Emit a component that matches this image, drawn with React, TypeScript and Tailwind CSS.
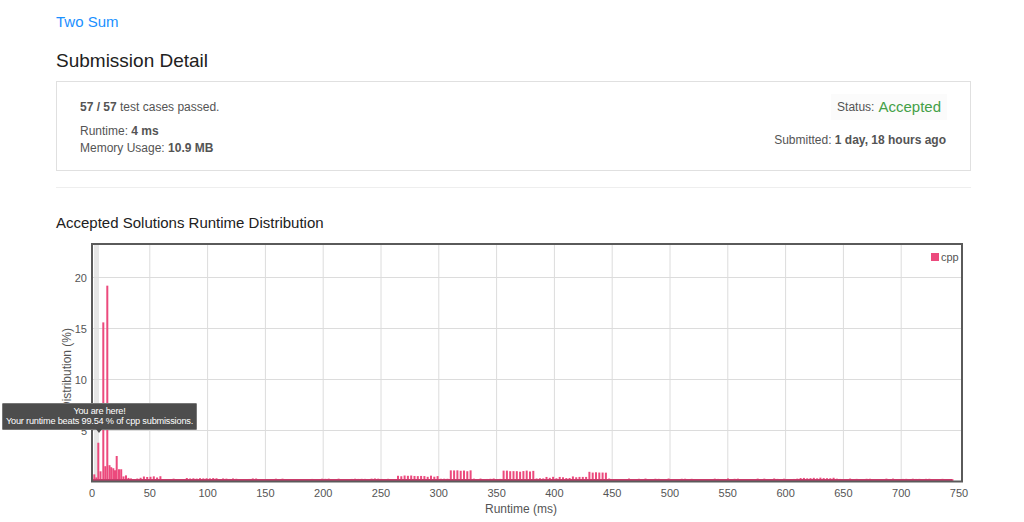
import React from 'react';

const PINK = '#ec4a7d';

// plot geometry inside the chart svg
const PL = 36;
const PR = 906;
const PT = 7;
const PB = 244.5;
const PX_PER_MS = (PR - 3 - PL) / 750;
const PX_PER_PCT = 10.2;

const early: [number, number][] = [
  [2.3, 0.7], [4.3, 0.4], [6.3, 3.8], [8.5, 1.0], [11.3, 15.6], [13.3, 1.5],
  [15.3, 19.2], [17.5, 1.6], [19.2, 1.4], [21.3, 1.3], [23, 1.1], [24.7, 2.5],
  [27, 1.2], [29.2, 1.2], [31.5, 0.5], [34, 0.6], [36.5, 0.35], [39, 0.3],
];

const bump = (ms: number, a: number, b: number, h: number) => (ms >= a && ms <= b ? h : 0);

const noise = (i: number) => Math.abs((Math.sin(i * 12.9898) * 43758.5453) % 1);

const buildBars = () => {
  const out: [number, number][] = [...early];
  let i = 0;
  for (let x = 42; x < 862; x += 3.3) {
    const ms = x / PX_PER_MS;
    let v = 0.18 + noise(i) * 0.12;
    if (ms > 40 && ms < 60) v = 0.35 + noise(i) * 0.25;
    if (ms > 80 && ms < 110) v = 0.25 + noise(i) * 0.1;
    v = Math.max(v, bump(ms, 262, 300, 0.45 + noise(i) * 0.15));
    v = Math.max(v, bump(ms, 310, 330, 1.0 + noise(i) * 0.1));
    v = Math.max(v, bump(ms, 355, 382, 0.95 + noise(i) * 0.12));
    v = Math.max(v, bump(ms, 385, 420, 0.3 + noise(i) * 0.2));
    v = Math.max(v, bump(ms, 420, 428, 0.45));
    v = Math.max(v, bump(ms, 428, 447, 0.85 + noise(i) * 0.12));
    v = Math.max(v, bump(ms, 612, 642, 0.3 + noise(i) * 0.08));
    out.push([x, v]);
    i++;
  }
  return out;
};

const bars = buildBars();

const RuntimeChart: React.FC = () => {
  const xTicks = Array.from({ length: 16 }, (_, i) => i * 50);
  const yTicks = [5, 10, 15, 20];

  return (
    <svg width="915" height="286" className="block" style={{ fontFamily: '"Liberation Sans", Arial, sans-serif' }}>
      <rect x={PL} y={PT} width={PR - PL} height={PB - PT} fill="#fff" />
      {/* user's bin */}
      <rect x={PL + 2} y={PT} width={5} height={PB - PT} fill="#e6e6e6" />
      {xTicks.slice(1, -1).map(t => (
        <line key={t} x1={PL + t * PX_PER_MS} x2={PL + t * PX_PER_MS} y1={PT} y2={PB} stroke="#dcdcdc" strokeWidth={1} />
      ))}
      {yTicks.map(t => (
        <line key={t} x1={PL} x2={PR} y1={PB - t * PX_PER_PCT} y2={PB - t * PX_PER_PCT} stroke="#dcdcdc" strokeWidth={1} />
      ))}
      {bars.map(([x, v], i) => (
        <rect key={i} x={PL + x - 1} y={PB - v * PX_PER_PCT} width={2} height={v * PX_PER_PCT} fill={PINK} />
      ))}
      <rect x={PL} y={PB - 2.5} width={PR - PL - 10} height={2.5} fill="#c93a6a" />
      <rect x={PL} y={PT} width={PR - PL} height={PB - PT} fill="none" stroke="#5a5a5a" strokeWidth={2} />

      {yTicks.map(t => (
        <text key={t} x={PL - 5} y={PB - t * PX_PER_PCT + 4} textAnchor="end" fontSize="11" fill="#555">{t}</text>
      ))}
      {xTicks.map(t => (
        <text key={t} x={PL + t * PX_PER_MS} y={260} textAnchor="middle" fontSize="11" fill="#555">{t}</text>
      ))}
      <text x={465} y={276} textAnchor="middle" fontSize="12" fill="#555">Runtime (ms)</text>
      <text x={0} y={0} transform="translate(15 132) rotate(-90)" textAnchor="middle" fontSize="12" fill="#555">Distribution (%)</text>

      <rect x={875} y={16} width={8} height={8} fill={PINK} />
      <text x={885} y={24} fontSize="11" fill="#555">cpp</text>
    </svg>
  );
};

export default function App() {
  return (
    <div className="min-h-[522px] bg-white text-[#212121]" style={{ fontFamily: '"Liberation Sans", Arial, sans-serif' }}>
      <div className="ml-[56px] w-[915px] pt-[12px]">
        <a className="block text-[15px] leading-[20px] text-[#1a90ff]">Two Sum</a>
        <h2 className="mt-[15px] text-[19px] leading-[28px] text-[#212121]">Submission Detail</h2>

        <div className="mt-[6px] flex h-[90px] justify-between border border-[#e0e0e0] pl-[23px] pr-[24px] text-[12px] text-[#545454]">
          <div className="pt-[16px]">
            <div className="leading-[18px]">
              <strong>57 / 57</strong> test cases passed.
            </div>
            <div className="mt-[7px] leading-[17px]">
              Runtime: <strong>4 ms</strong>
            </div>
            <div className="leading-[17px]">
              Memory Usage: <strong>10.9 MB</strong>
            </div>
          </div>
          <div className="flex flex-col items-end pt-[12px]">
            <div className="mr-[-1px] flex h-[26px] items-center bg-[#fbfbfb] px-[6px]">
              <span>Status:</span>
              <span className="ml-[4px] text-[15px] text-[#43a047]">Accepted</span>
            </div>
            <div className="mt-[12px] leading-[17px]">
              Submitted: <strong>1 day, 18 hours ago</strong>
            </div>
          </div>
        </div>

        <div className="mt-[16px] h-px bg-[#eeeeee]" />

        <h3 className="mt-[25px] text-[15px] leading-[20px] text-[#212121]">Accepted Solutions Runtime Distribution</h3>

        <div className="relative mt-[4px]">
          <RuntimeChart />
          <div className="absolute left-[-54px] top-[166px] w-[195px] whitespace-nowrap rounded-[1px] border border-[#777] bg-[#4d4d4d] pt-[2px] pb-[3px] text-center text-[9.2px] leading-[10px] tracking-[-0.2px] text-white">
            <div>You are here!</div>
            <div>Your runtime beats 99.54 % of cpp submissions.</div>
            <div className="absolute left-[93px] top-full h-0 w-0 border-x-[3px] border-t-[4px] border-x-transparent border-t-[#4d4d4d]" />
          </div>
        </div>
      </div>
    </div>
  );
}
